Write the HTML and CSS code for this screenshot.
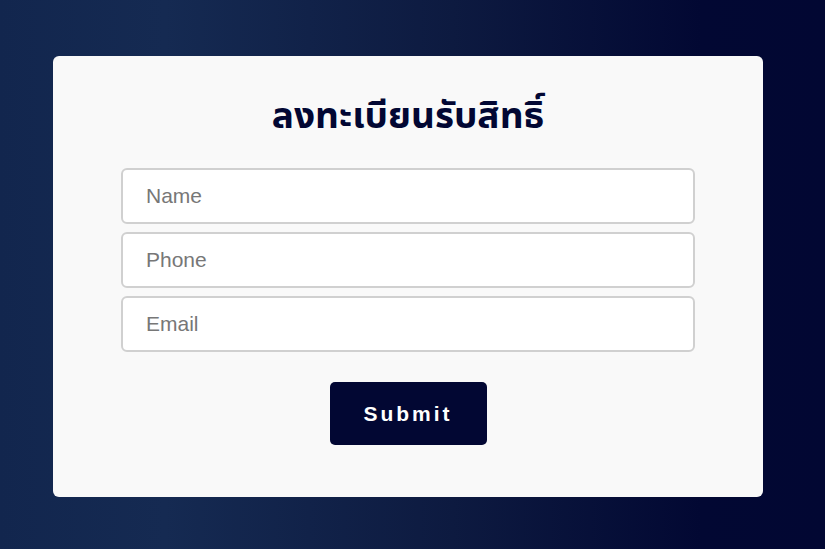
FILE: index.html
```html
<!DOCTYPE html>
<html lang="th">
<head>
    <meta charset="UTF-8">
    <meta name="viewport" content="width=device-width, initial-scale=1.0">
    <title>ลงทะเบียนรับสิทธิ์</title>
    <link rel="stylesheet" href="styles.css">
</head>
<body>
    <div class="page">
        <form class="card" onsubmit="return false;">
            <h2 class="title">ลงทะเบียนรับสิทธิ์</h2>
            <input type="text" class="field" placeholder="Name">
            <input type="tel" class="field" placeholder="Phone">
            <input type="email" class="field" placeholder="Email">
            <button type="submit" class="submit-btn">Submit</button>
        </form>
    </div>
</body>
</html>
```

FILE: styles.css
```css
html, body {
    margin: 0;
    height: 100%;
}
body {
    font-family: "Liberation Sans", Arial, sans-serif;
    background: linear-gradient(90deg, #12264e 0%, #152a52 20%, #0d1a40 55%, #020833 85%, #020733 100%);
    overflow: hidden;
}
.page {
    padding: 56px 0 0 53px;
}
.card {
    width: 710px;
    box-sizing: border-box;
    background: #f9f9f9;
    border-radius: 6px;
    padding: 25px 68px 52px;
    display: flex;
    flex-direction: column;
    align-items: center;
}
.title {
    margin: 0 0 21px;
    font-family: "Noto Sans Thai UI", "Noto Sans Thai", "Noto Sans", "Liberation Sans", sans-serif;
    font-size: 37px;
    font-weight: 700;
    line-height: 66px;
    color: #020733;
}
.field {
    width: 100%;
    height: 56px;
    box-sizing: border-box;
    margin-bottom: 8px;
    padding: 0 23px;
    font-family: "Liberation Sans", Arial, sans-serif;
    font-size: 21px;
    color: #333;
    background: #fff;
    border: 2px solid #d0d0d0;
    border-radius: 6px;
    outline: none;
}
.field::placeholder {
    color: #777;
}
.submit-btn {
    margin-top: 22px;
    width: 157px;
    height: 63px;
    background: #020733;
    color: #fff;
    border: none;
    border-radius: 5px;
    font-family: "Liberation Sans", Arial, sans-serif;
    font-size: 21px;
    font-weight: 700;
    letter-spacing: 3px;
    cursor: pointer;
}
```
